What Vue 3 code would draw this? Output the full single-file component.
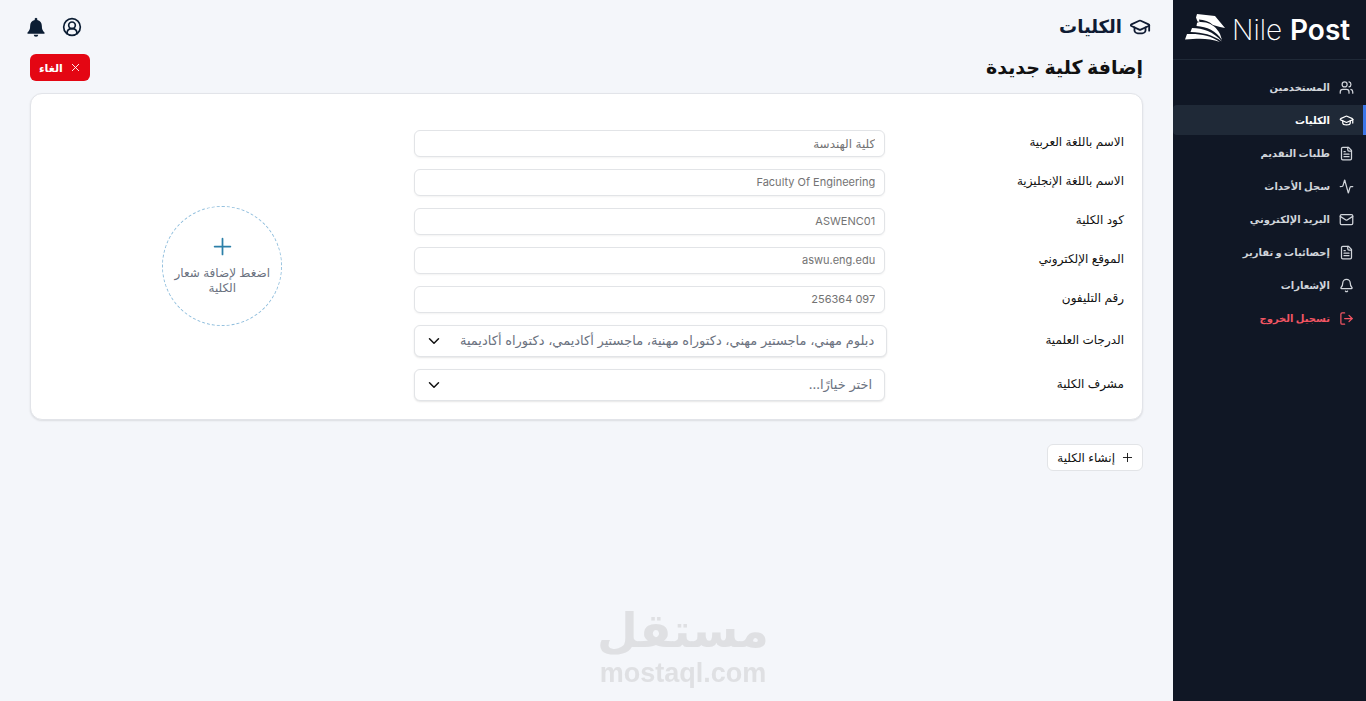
<script setup>
import { ref } from 'vue'

const icons = {
  users: ['M16 21v-2a4 4 0 0 0-4-4H6a4 4 0 0 0-4 4v2', 'M9 3a4 4 0 1 0 0 8a4 4 0 1 0 0-8', 'M22 21v-2a4 4 0 0 0-3-3.9', 'M16 3.1a4 4 0 0 1 0 7.8'],
  cap: ['M21.4 10.9a1 1 0 0 0 0-1.8l-8.6-3.9a2 2 0 0 0-1.6 0L2.6 9.1a1 1 0 0 0 0 1.8l8.6 3.9a2 2 0 0 0 1.6 0z', 'M22 10v6', 'M6 12.5V16c0 1.6 2.7 3 6 3s6-1.4 6-3v-3.5'],
  file: ['M15 2H6a2 2 0 0 0-2 2v16a2 2 0 0 0 2 2h12a2 2 0 0 0 2-2V7z', 'M14 2v4a2 2 0 0 0 2 2h4', 'M10 9H8', 'M16 13H8', 'M16 17H8'],
  activity: ['M22 12h-2.5a2 2 0 0 0-1.9 1.5l-2.4 8.3a.25.25 0 0 1-.5 0L9.3 2.2a.25.25 0 0 0-.5 0l-2.4 8.3A2 2 0 0 1 4.5 12H2'],
  mail: ['M4 4h16a2 2 0 0 1 2 2v12a2 2 0 0 1-2 2H4a2 2 0 0 1-2-2V6a2 2 0 0 1 2-2z', 'M22 7l-9 5.7a2 2 0 0 1-2 0L2 7'],
  bell: ['M10.3 21a2 2 0 0 0 3.4 0', 'M3.3 15.3A1 1 0 0 0 4 17h16a1 1 0 0 0 .7-1.7C19.4 14 18 12.5 18 8A6 6 0 0 0 6 8c0 4.5-1.4 6-2.7 7.3'],
  logout: ['M9 21H5a2 2 0 0 1-2-2V5a2 2 0 0 1 2-2h4', 'M16 17l5-5l-5-5', 'M21 12H9'],
}

const links = [
  { text: 'المستخدمين', icon: 'users' },
  { text: 'الكليات', icon: 'cap', active: true },
  { text: 'طلبات التقديم', icon: 'file' },
  { text: 'سجل الأحداث', icon: 'activity' },
  { text: 'البريد الإلكتروني', icon: 'mail' },
  { text: 'إحصائيات و تقارير', icon: 'file' },
  { text: 'الإشعارات', icon: 'bell' },
  { text: 'تسجيل الخروج', icon: 'logout', danger: true },
]

const fields = [
  { id: 'name-ar', label: 'الاسم باللغة العربية', hint: 'كلية الهندسة', arabic: true },
  { id: 'name-en', label: 'الاسم باللغة الإنجليزية', hint: 'Faculty Of Engineering' },
  { id: 'code', label: 'كود الكلية', hint: 'ASWENC01' },
  { id: 'site', label: 'الموقع الإلكتروني', hint: 'aswu.eng.edu' },
  { id: 'phone', label: 'رقم التليفون', hint: '097 256364' },
]

const selects = [
  { id: 'degrees', label: 'الدرجات العلمية', value: 'دبلوم مهني، ماجستير مهني، دكتوراه مهنية، ماجستير أكاديمي، دكتوراه أكاديمية', wide: true },
  { id: 'supervisor', label: 'مشرف الكلية', value: 'اختر خيارًا...' },
]

const values = ref({})
</script>

<template>
  <div class="page" dir="rtl">
    <aside class="sidebar">
      <a class="brand" href="#" dir="ltr">
        <svg class="brand-mark" viewBox="0 0 40 30" aria-hidden="true">
          <path d="M12 1L30 3L40 15L35 14L28 12C24 8 19 7 14 6.500L14.500 9L12.500 8.500L11 4.500z" />
          <path d="M12 10C13 8.500 18 9 21 9.500C27 11 32 15 35 21L37 27C31 18 22 13.500 11.500 13z" />
          <path d="M7 15C18 15 28 18.500 37 28.500C27 21.500 18 19.500 5.500 19z" />
          <path d="M2 21C15 20.500 25 22 35 29C24 25 14 25.500 0 26.500z" />
        </svg>
        <span class="brand-name">Nile <b>Post</b></span>
      </a>
      <nav class="nav">
        <a v-for="l in links" :key="l.text" href="#" class="link" :class="{ active: l.active, danger: l.danger }">
          <svg class="icon" viewBox="0 0 24 24" aria-hidden="true"><path v-for="d in icons[l.icon]" :key="d" :d="d" /></svg>
          <span>{{ l.text }}</span>
        </a>
      </nav>
    </aside>

    <main class="main">
      <header class="topbar">
        <h1 class="title">
          <svg class="title-icon" viewBox="0 0 24 24" aria-hidden="true"><path v-for="d in icons.cap" :key="d" :d="d" /></svg>
          <span>الكليات</span>
        </h1>
        <div class="tools">
          <button class="tool" type="button" aria-label="الحساب">
            <svg class="tool-icon" viewBox="0 0 24 24" aria-hidden="true">
              <circle cx="12" cy="12" r="10" /><circle cx="12" cy="10" r="4" /><path d="M6 20c0-4 2.500-6 6-6s6 2 6 6" />
            </svg>
          </button>
          <button class="tool" type="button" aria-label="الإشعارات">
            <svg class="tool-icon solid" viewBox="0 0 24 24" aria-hidden="true">
              <path d="M12 1a2 2 0 0 0-1.500 2.600C7 4.300 5 7 5 10.500C5 15 4 16.500 1.800 18.500V20h20.400v-1.500C20 16.500 19 15 19 10.500C19 7 17 4.300 13.500 3.600A2 2 0 0 0 12 1z" />
              <path d="M9.300 21.200h5.400a2.700 2.400 0 0 1-5.400 0z" />
            </svg>
          </button>
        </div>
      </header>

      <div class="heading">
        <h2 class="subtitle">إضافة كلية جديدة</h2>
        <button class="cancel" type="button">
          <svg class="small-icon" viewBox="0 0 24 24" aria-hidden="true"><path d="M5 5l14 14M19 5L5 19" /></svg>
          <span>الغاء</span>
        </button>
      </div>

      <form id="college" class="card" @submit.prevent>
        <div class="rows">
          <div v-for="f in fields" :key="f.id" class="row">
            <label class="label" :for="f.id">{{ f.label }}</label>
            <input :id="f.id" v-model="values[f.id]" class="input" :class="{ arabic: f.arabic }" type="text" :placeholder="f.hint">
          </div>
          <div v-for="s in selects" :key="s.id" class="row">
            <label class="label" :for="s.id">{{ s.label }}</label>
            <div class="select-box" :class="{ wide: s.wide }">
              <select :id="s.id" class="select"><option>{{ s.value }}</option></select>
              <svg class="chevron" viewBox="0 0 24 24" aria-hidden="true"><path d="M3 7.500l9 9l9-9" /></svg>
            </div>
          </div>
        </div>
        <div class="upload-area">
          <button class="upload" type="button">
            <svg class="plus" viewBox="0 0 24 24" aria-hidden="true"><path d="M12 3v18M3 12h18" /></svg>
            <span>اضغط لإضافة شعار الكلية</span>
          </button>
        </div>
      </form>

      <button class="create" type="submit" form="college">
        <svg class="small-icon" viewBox="0 0 24 24" aria-hidden="true"><path d="M12 3v18M3 12h18" /></svg>
        <span>إنشاء الكلية</span>
      </button>
    </main>

    <div class="watermark">
      <span class="mark-ar">مستقل</span>
      <span class="mark-en" dir="ltr">mostaql.com</span>
    </div>
  </div>
</template>

<style>
body {
  background: #f4f6fa;
}
</style>

<style scoped>
* {
  box-sizing: border-box;
}
.page {
  display: grid;
  grid-template-columns: 193px 1fr;
  min-height: 100vh;
  background: #f4f6fa;
  color: #111;
  font-family: "Inter", "DejaVu Sans", sans-serif;
  font-size: 12px;
  line-height: 16px;
}
button,
input,
select {
  font: inherit;
}
svg {
  display: block;
  flex: none;
  fill: none;
  stroke: currentColor;
  stroke-width: 2;
  stroke-linecap: round;
  stroke-linejoin: round;
}
.sidebar {
  background: #101725;
}
.brand {
  display: flex;
  align-items: center;
  gap: 7px;
  height: 60px;
  padding: 0 12px;
  border-bottom: 1px solid #1f2937;
  color: #fff;
  text-decoration: none;
}
.brand-mark {
  width: 40px;
  height: 30px;
  margin-bottom: 3px;
  fill: #fff;
  stroke: none;
}
.brand-name {
  font-size: 28px;
  font-weight: 200;
  line-height: 36px;
  white-space: nowrap;
}
.brand-name b {
  font-weight: 600;
}
.nav {
  display: flex;
  flex-direction: column;
  gap: 3px;
  padding-top: 12px;
}
.link {
  display: flex;
  align-items: center;
  gap: 9px;
  height: 30px;
  padding: 0 12px;
  color: #d1d5db;
  font-size: 10px;
  font-weight: 700;
  text-decoration: none;
  white-space: nowrap;
}
.link.active {
  padding-right: 9px;
  border-right: 3px solid #3b76e8;
  border-radius: 4px 0 0 4px;
  background: #1f2937;
  color: #fff;
}
.link.danger {
  color: #f25563;
}
.icon {
  width: 15px;
  height: 15px;
}
.main {
  padding: 0 30px;
}
.topbar {
  display: flex;
  align-items: center;
  justify-content: space-between;
  height: 54px;
  margin-right: -8px;
}
.title {
  display: flex;
  align-items: center;
  gap: 7px;
  margin: 0;
  color: #0f1b33;
  font-size: 18px;
  line-height: 28px;
}
.title-icon {
  width: 22px;
  height: 22px;
}
.tools {
  display: flex;
  gap: 16px;
  margin-left: -4px;
}
.tool {
  padding: 0;
  border: 0;
  background: none;
  color: #0b1d33;
}
.tool-icon {
  width: 20px;
  height: 20px;
}
.solid {
  fill: currentColor;
  stroke: none;
}
.heading {
  display: flex;
  align-items: center;
  justify-content: space-between;
  height: 27px;
}
.subtitle {
  margin: 0;
  font-size: 19px;
  line-height: 27px;
}
.cancel,
.create {
  display: flex;
  align-items: center;
  gap: 7px;
  height: 27px;
  padding: 0 9px;
  border: 0;
  border-radius: 6px;
  white-space: nowrap;
}
.cancel {
  background: #e40613;
  color: #fff;
  font-size: 11px;
  font-weight: 700;
}
.small-icon {
  width: 11px;
  height: 11px;
}
.card {
  display: grid;
  grid-template-columns: 65fr 35fr;
  margin-top: 12px;
  padding: 36px 18px 18px 0;
  border: 1px solid #e2e4e9;
  border-radius: 12px;
  background: #fff;
  box-shadow: 0 1px 2px #0000001a;
}
.rows {
  display: flex;
  flex-direction: column;
  gap: 12px;
}
.row {
  display: grid;
  grid-template-columns: 1fr 2fr;
  column-gap: 3px;
  align-items: center;
}
.label {
  padding-bottom: 3px;
}
.input {
  width: 100%;
  height: 27px;
  padding: 0 9px 1px;
  border: 1px solid #e2e4e7;
  border-radius: 6px;
  outline: 0;
  background: #fff;
  box-shadow: 0 1px 2px #0000000d;
  font-size: 11px;
}
.input.arabic {
  font-size: 12px;
}
.input::placeholder {
  color: #737373;
  opacity: 1;
}
.select-box {
  position: relative;
}
.wide {
  margin-right: -2px;
}
.select {
  display: block;
  width: 100%;
  height: 32px;
  padding: 0 12px 2px 30px;
  border: 1px solid #e2e4e7;
  border-radius: 6px;
  appearance: none;
  background: #fff;
  box-shadow: 0 1px 2px #0000001a;
  color: #6b7280;
  font-size: 13px;
}
.chevron {
  position: absolute;
  top: 10px;
  left: 14px;
  width: 12px;
  height: 12px;
  color: #111;
  stroke-width: 3;
  pointer-events: none;
}
.upload-area {
  display: grid;
  place-items: center;
}
.upload {
  display: flex;
  flex-direction: column;
  align-items: center;
  justify-content: center;
  gap: 8px;
  width: 120px;
  height: 120px;
  padding: 0 8px;
  border: 1px dashed #93c0de;
  border-radius: 50%;
  background: #fff;
  color: #6b7280;
  line-height: 15px;
}
.plus {
  width: 21px;
  height: 21px;
  color: #2c7fa8;
}
.create {
  margin-top: 24px;
  border: 1px solid #e2e4e7;
  background: #fff;
  color: #111;
}
.watermark {
  position: fixed;
  bottom: 14px;
  left: 50%;
  display: flex;
  flex-direction: column;
  align-items: center;
  width: 166px;
  margin-left: -83px;
  color: #dfe0e3;
  font-weight: 700;
  pointer-events: none;
}
.mark-ar {
  font-family: "DejaVu Sans", sans-serif;
  font-size: 47px;
  line-height: 56px;
}
.mark-en {
  font-family: "Liberation Sans", sans-serif;
  font-size: 27px;
  line-height: 28px;
}
</style>
